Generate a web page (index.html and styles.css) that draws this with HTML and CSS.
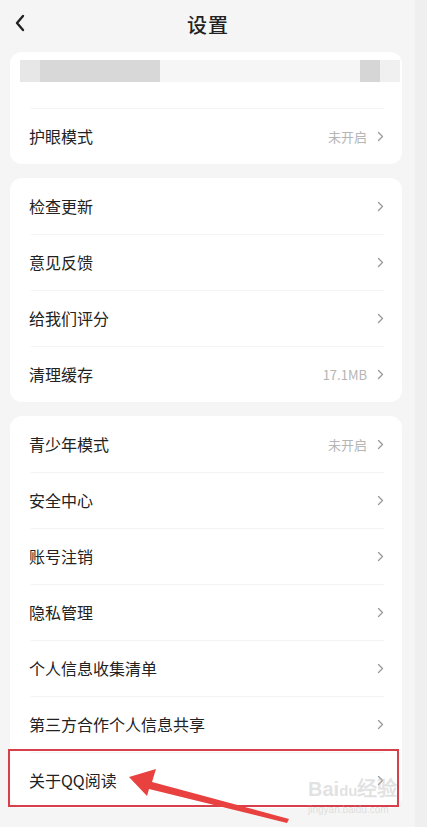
FILE: index.html
```html
<!DOCTYPE html>
<html lang="zh-CN">
<head>
  <meta charset="UTF-8">
  <meta name="viewport" content="width=device-width, initial-scale=1.0">
  <title>设置</title>
  <link rel="stylesheet" href="styles.css">
</head>
<body>
  <div class="page">
    <header class="topbar">
      <svg class="back" width="12" height="18" viewBox="0 0 12 18"><path d="M9 2L3 9l6 7" fill="none" stroke="#222" stroke-width="2.4" stroke-linecap="round" stroke-linejoin="round"/></svg>
      <h1>设置</h1>
    </header>

    <!-- 账号信息（打码） + 护眼模式 -->
    <section class="card">
      <div class="row mosaic-row">
        <div class="mosaic">
          <span class="m1"></span><span class="m2"></span><span class="m3"></span><span class="m4"></span><span class="m5"></span>
        </div>
      </div>
      <div class="row">
        <span class="label">护眼模式</span>
        <span class="value">未开启</span>
        <svg class="arrow" width="7" height="11" viewBox="0 0 7 11"><path d="M1.5 1.5l4 4-4 4" fill="none" stroke="#9a9a9a" stroke-width="1.3" stroke-linecap="round" stroke-linejoin="round"/></svg>
      </div>
    </section>

    <section class="card">
      <div class="row"><span class="label">检查更新</span><svg class="arrow" width="7" height="11" viewBox="0 0 7 11"><path d="M1.5 1.5l4 4-4 4" fill="none" stroke="#9a9a9a" stroke-width="1.3" stroke-linecap="round" stroke-linejoin="round"/></svg></div>
      <div class="row"><span class="label">意见反馈</span><svg class="arrow" width="7" height="11" viewBox="0 0 7 11"><path d="M1.5 1.5l4 4-4 4" fill="none" stroke="#9a9a9a" stroke-width="1.3" stroke-linecap="round" stroke-linejoin="round"/></svg></div>
      <div class="row"><span class="label">给我们评分</span><svg class="arrow" width="7" height="11" viewBox="0 0 7 11"><path d="M1.5 1.5l4 4-4 4" fill="none" stroke="#9a9a9a" stroke-width="1.3" stroke-linecap="round" stroke-linejoin="round"/></svg></div>
      <div class="row"><span class="label">清理缓存</span><span class="value">17.1MB</span><svg class="arrow" width="7" height="11" viewBox="0 0 7 11"><path d="M1.5 1.5l4 4-4 4" fill="none" stroke="#9a9a9a" stroke-width="1.3" stroke-linecap="round" stroke-linejoin="round"/></svg></div>
    </section>

    <section class="card">
      <div class="row"><span class="label">青少年模式</span><span class="value">未开启</span><svg class="arrow" width="7" height="11" viewBox="0 0 7 11"><path d="M1.5 1.5l4 4-4 4" fill="none" stroke="#9a9a9a" stroke-width="1.3" stroke-linecap="round" stroke-linejoin="round"/></svg></div>
      <div class="row"><span class="label">安全中心</span><svg class="arrow" width="7" height="11" viewBox="0 0 7 11"><path d="M1.5 1.5l4 4-4 4" fill="none" stroke="#9a9a9a" stroke-width="1.3" stroke-linecap="round" stroke-linejoin="round"/></svg></div>
      <div class="row"><span class="label">账号注销</span><svg class="arrow" width="7" height="11" viewBox="0 0 7 11"><path d="M1.5 1.5l4 4-4 4" fill="none" stroke="#9a9a9a" stroke-width="1.3" stroke-linecap="round" stroke-linejoin="round"/></svg></div>
      <div class="row"><span class="label">隐私管理</span><svg class="arrow" width="7" height="11" viewBox="0 0 7 11"><path d="M1.5 1.5l4 4-4 4" fill="none" stroke="#9a9a9a" stroke-width="1.3" stroke-linecap="round" stroke-linejoin="round"/></svg></div>
      <div class="row"><span class="label">个人信息收集清单</span><svg class="arrow" width="7" height="11" viewBox="0 0 7 11"><path d="M1.5 1.5l4 4-4 4" fill="none" stroke="#9a9a9a" stroke-width="1.3" stroke-linecap="round" stroke-linejoin="round"/></svg></div>
      <div class="row"><span class="label">第三方合作个人信息共享</span><svg class="arrow" width="7" height="11" viewBox="0 0 7 11"><path d="M1.5 1.5l4 4-4 4" fill="none" stroke="#9a9a9a" stroke-width="1.3" stroke-linecap="round" stroke-linejoin="round"/></svg></div>
      <div class="row"><span class="label">关于QQ阅读</span><svg class="arrow" width="7" height="11" viewBox="0 0 7 11"><path d="M1.5 1.5l4 4-4 4" fill="none" stroke="#9a9a9a" stroke-width="1.3" stroke-linecap="round" stroke-linejoin="round"/></svg></div>
    </section>

    <section class="card"></section>

    <!-- 标注：红框 + 箭头 -->
    <div class="highlight"></div>
    <svg class="pointer" width="427" height="827" viewBox="0 0 427 827">
      <polygon points="129,777 156,769 152,782 289,819 287,823 149,789 147,796" fill="#e8413f"/>
    </svg>
    <div class="watermark">
      <span class="wm-logo">Bai<b>du</b>经验</span>
      <span class="wm-url">jingyan.baidu.com</span>
    </div>
  </div>
  <div class="scroll-strip"></div>
</body>
</html>
```

FILE: styles.css
```css
/* 基础 */
body {
  margin: 0;
  background: #f5f5f5;
  font-family: "Noto Sans CJK SC", "Noto Sans", sans-serif;
  color: #222;
  overflow: hidden;
}
.page {
  position: relative;
  width: 415px;
  height: 827px;
  padding: 0 13px 0 10px;
  box-sizing: border-box;
}
.scroll-strip {
  position: absolute;
  top: 0;
  right: 0;
  width: 12px;
  height: 827px;
  background: #efefef;
}
/* 顶部导航 */
.topbar {
  height: 52px;
  display: flex;
  align-items: center;
  justify-content: center;
  position: relative;
}
.topbar h1 {
  margin: 0;
  font-size: 20px;
  font-weight: 500;
  letter-spacing: 1px;
  margin-left: 4px;
  margin-top: -4px;
}
.back {
  position: absolute;
  left: 4px;
  top: 14px;
}
/* 卡片 */
.card {
  background: #fff;
  border-radius: 12px;
  margin-bottom: 14px;
  padding: 0 18px 0 19px;
}
.row {
  height: 56px;
  display: flex;
  align-items: center;
  position: relative;
}
.row + .row::before {
  content: "";
  position: absolute;
  top: 0;
  left: 2px;
  right: 0;
  height: 1px;
  background: #f3f3f3;
}
.label {
  flex: 1;
  font-size: 16px;
  color: #222;
}
.value {
  font-size: 13px;
  color: #b5b5b5;
  margin-right: 10px;
}
.arrow {
  display: block;
}
/* 打码区域 */
.mosaic-row {
  align-items: flex-start;
}
.mosaic {
  display: flex;
  margin: 8px 0 0 -9px;
  width: 392px;
  height: 22px;
}
.mosaic span {
  display: block;
  height: 22px;
}
.mosaic .m1 { width: 20px; background: #e7e7e7; }
.mosaic .m2 { width: 120px; background: #d8d8d8; }
.mosaic .m3 { width: 200px; background: #f6f6f6; }
.mosaic .m4 { width: 20px; background: #d6d6d6; }
.mosaic .m5 { width: 20px; background: #f0f0f0; }
/* 标注 */
.highlight {
  position: absolute;
  left: 8px;
  top: 749px;
  width: 387px;
  height: 54px;
  border: 2px solid #d6404a;
}
.pointer {
  position: absolute;
  left: 0;
  top: 0;
}
.watermark {
  position: absolute;
  left: 308px;
  top: 778px;
  display: flex;
  flex-direction: column;
  color: rgba(190, 190, 190, 0.45);
}
.wm-logo {
  font-family: "Liberation Sans", sans-serif;
  font-size: 20px;
  font-weight: bold;
  line-height: 22px;
}
.wm-logo b {
  font-size: 15px;
}
.wm-url {
  font-family: "Liberation Sans", sans-serif;
  font-size: 10px;
  margin-top: 2px;
}
```
